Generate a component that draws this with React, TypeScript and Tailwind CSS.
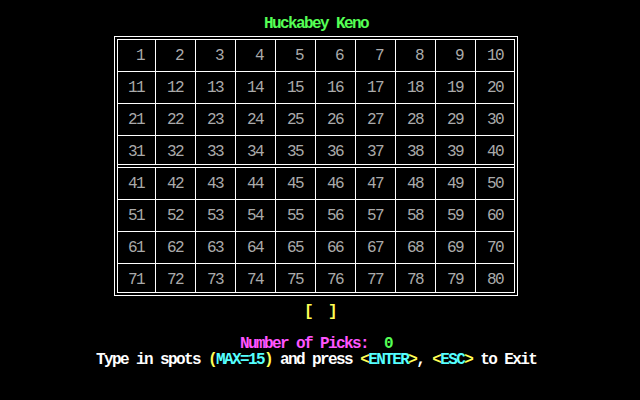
const rowHeights = ["h-[31px]", "h-[32px] border-t", "h-[32px] border-t", "h-[29px] border-t"];
const colWidths = ["w-[37px] pl-[10px]", "w-[40px] pl-[11px] border-l", "w-[40px] pl-[11px] border-l", "w-[40px] pl-[11px] border-l", "w-[40px] pl-[11px] border-l", "w-[40px] pl-[11px] border-l", "w-[40px] pl-[11px] border-l", "w-[40px] pl-[11px] border-l", "w-[40px] pl-[11px] border-l", "w-[39px] pl-[11px] border-l"];

function Half({ start }: { start: number }) {
  return (
    <div className="flex flex-col">
      {rowHeights.map((rh, r) => (
        <div key={r} className={`flex border-white ${rh}`}>
          {colWidths.map((cw, c) => {
            const n = start + r * 10 + c + 1;
            return (
              <div key={c} className={`border-white pt-[8px] ${cw}`}>
                <span className="block w-[16px] h-[16px] text-right font-normal text-[#aaaaaa]">{n}</span>
              </div>
            );
          })}
        </div>
      ))}
    </div>
  );
}

export default function App() {
  return (
    <div
      className="w-[640px] h-[400px] bg-black flex flex-col text-[16px] leading-[16px] tracking-[-1.6px] font-bold whitespace-pre overflow-hidden"
      style={{ fontFamily: '"Liberation Mono", "DejaVu Sans Mono", monospace' }}
    >
      <div className="mt-[16px] h-[16px] pl-[264px] text-[#55ff55]">Huckabey Keno</div>

      {/* Board */}
      <div className="mt-[4px] ml-[114px] w-[404px] border border-white p-[2px]">
        <div className="flex flex-col border border-white">
          <Half start={0} />
          <div className="h-[4px] border-y border-white" />
          <Half start={40} />
        </div>
      </div>

      <div className="mt-[8px] h-[16px] pl-[304px] text-[#ffff55]">[  ]</div>

      <div className="mt-[16px] h-[16px] pl-[240px]">
        <span className="text-[#ff55ff]">Number of Picks:  </span>
        <span className="text-[#55ff55]">0</span>
      </div>

      <div className="h-[16px] pl-[96px] text-white">
        Type in spots <span className="text-[#ffff55]">(</span>
        <span className="text-[#55ffff]">MAX=15</span>
        <span className="text-[#ffff55]">)</span> and press{" "}
        <span className="text-[#ffff55]">&lt;</span>
        <span className="text-[#55ffff]">ENTER</span>
        <span className="text-[#ffff55]">&gt;</span>,{" "}
        <span className="text-[#ffff55]">&lt;</span>
        <span className="text-[#55ffff]">ESC</span>
        <span className="text-[#ffff55]">&gt;</span> to Exit
      </div>
    </div>
  );
}
